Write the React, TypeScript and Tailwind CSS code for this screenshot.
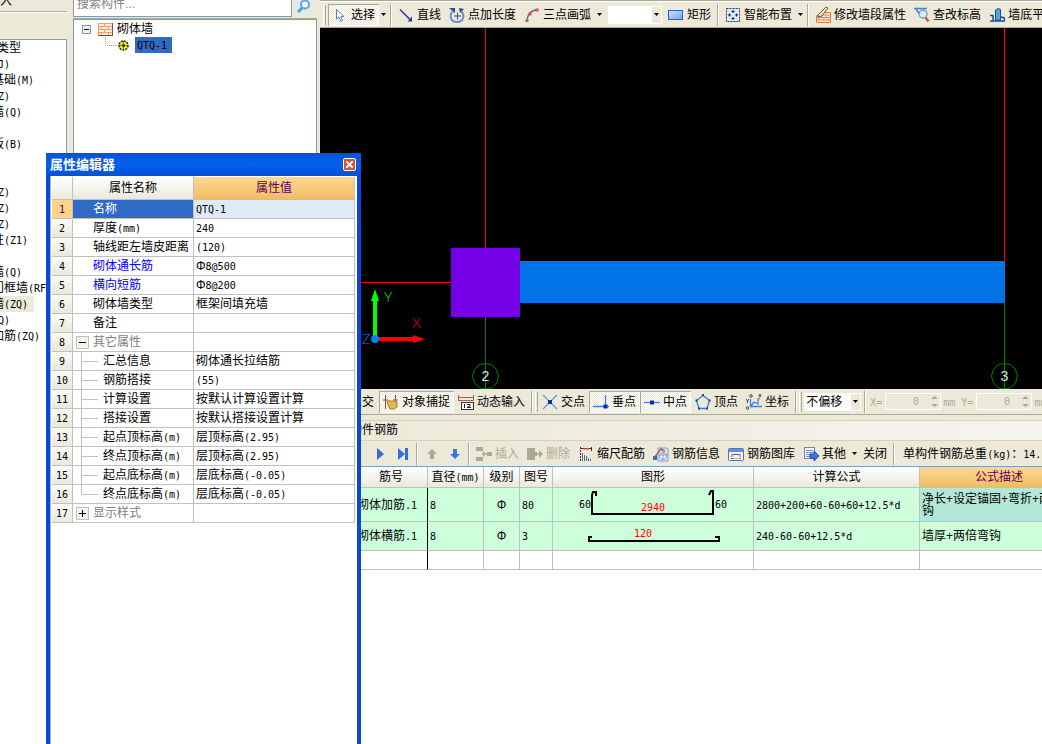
import type { ReactNode } from "react";

const Txt = ({ children }: { children: string }) => (
  <span className="whitespace-pre">
    {children.split(/([\x20-\x7e]+)/).map((part, i) =>
      i % 2 ? (
        <span key={i} className="font-['DejaVu_Sans_Mono',monospace] text-[10px] leading-none">
          {part}
        </span>
      ) : (
        part
      ),
    )}
  </span>
);

const Icon = ({ children }: { children: ReactNode }) => (
  <svg width="16" height="16" viewBox="0 0 16 16" fill="none" className="flex-none" aria-hidden="true">
    {children}
  </svg>
);

const CursorIcon = () => (
  <Icon>
    <path d="M4.500 2.500v9.500l2.500-2 2 4.500 1.500-1-1.500-4h3z" fill="#fff" stroke="#5b7fb8" />
  </Icon>
);
const LineIcon = () => (
  <Icon>
    <path d="M2 2.500 12 12.500" stroke="#1c3f94" strokeWidth="1.500" />
    <path d="M14 14.500H9.500L14 9.500z" fill="#1c3f94" />
  </Icon>
);
const LengthIcon = () => (
  <Icon>
    <path d="M3.500 4.500C0 8 1.500 15 8 15s8-7 4.500-10.500" stroke="#6f8fc4" strokeWidth="2" />
    <path d="M8.500 5.500v7M5 9h7" stroke="#2b4a8f" />
    <path d="M0 1h6v5zM10 1l5 1-4 4z" fill="#2b4a8f" />
  </Icon>
);
const ArcIcon = () => (
  <Icon>
    <path d="M3 14C3 8 7 3 13 3" stroke="#3b68b5" strokeWidth="1.500" />
    <path d="M1.500 12h3v3h-3zM4.500 5.500h3v3h-3zM11.500 1.500h3v3h-3z" fill="#e9502c" />
  </Icon>
);
const RectIcon = () => (
  <Icon>
    <linearGradient id="rect-fill" x1="0" y1="0" x2="1" y2="1">
      <stop stopColor="#d3e4fd" />
      <stop offset="1" stopColor="#6f9ff0" />
    </linearGradient>
    <rect x=".5" y="3.500" width="14" height="9" fill="url(#rect-fill)" stroke="#2b5fd0" />
  </Icon>
);
const SmartIcon = () => (
  <Icon>
    <rect x="1.500" y="1.500" width="13" height="13" fill="#dce8f8" stroke="#23365e" strokeDasharray="2 1" />
    <path d="M8 3v3M6.500 4.500h3M8 10v3M6.500 11.500h3M3 8h3M4.500 6.500v3M10 8h3M11.500 6.500v3" stroke="#1c2b4d" />
  </Icon>
);
const WallEditIcon = () => (
  <Icon>
    <path d="M1.500 15.500v-7h4l3-3h7v10z" fill="#fde6cf" stroke="#d9803f" />
    <path d="M2 10.500h13M2 13h13M8 8h7M6 8v2.500M11 8v2.500M4 10.500V13M9 10.500V13M13 10.500V13" stroke="#d9803f" strokeWidth=".8" />
    <path d="M3 8 11 0l2 1-6 8-4 1z" fill="#f2e4b8" stroke="#333" strokeWidth=".8" />
  </Icon>
);
const LevelIcon = () => (
  <Icon>
    <path d="M0 1.500h13M2 2l4 6 2-2" stroke="#4a7fc9" strokeWidth="1.500" />
    <circle cx="9" cy="7" r="4" fill="#d6e9fb" stroke="#7f96ba" strokeWidth="1.300" />
    <path d="m11.500 10.500 3 4" stroke="#b9603a" strokeWidth="2.500" />
  </Icon>
);
const BaseIcon = () => (
  <Icon>
    <path d="M6.500 13V3l3-1.500 2 1V13z" fill="#5ba0dd" stroke="#174f93" />
    <path d="M1 8.500h3V14H1M12 10l3.500 1v3H4V9" stroke="#174f93" strokeWidth="1.500" />
  </Icon>
);
const SnapIcon = () => (
  <Icon>
    <path d="M2.500 1v14M12.500 1v9M0 6h5M10 6h5" stroke="#964b4b" />
    <path d="M4 8c2-3 4 0 6-1l4 1v5l-3 2H7z" fill="#e2b94f" stroke="#a77e25" />
  </Icon>
);
const DynIcon = () => (
  <Icon>
    <path d="M.5 1v6M15.500 1v6M1 3.500h14M1 6.500h14" stroke="#a25d5d" />
    <rect x="3.500" y="8.500" width="12" height="7" fill="#fff" stroke="#333" />
    <path d="M6.500 10v4M9 10.500h3v1.500l-3 1.500h4" stroke="#222" />
  </Icon>
);
const CrossIcon = () => (
  <Icon>
    <path d="m1 1 14 14M15 1 1 15" stroke="#5e9be6" strokeWidth="1.300" />
    <rect x="6" y="6" width="4" height="4" fill="#12308f" />
  </Icon>
);
const PerpIcon = () => (
  <Icon>
    <path d="M0 12.500h16M12.500 1v13" stroke="#3d83dc" strokeWidth="1.300" />
    <rect x="10.500" y="10.500" width="4" height="4" fill="#12308f" />
  </Icon>
);
const MidIcon = () => (
  <Icon>
    <path d="M0 8.500h16" stroke="#3d83dc" strokeWidth="1.300" />
    <rect x="6" y="6.500" width="4" height="4" fill="#12308f" />
  </Icon>
);
const VertexIcon = () => (
  <Icon>
    <path d="m8 1.500 6.500 5L12 14.500H4L1.500 6.500z" stroke="#3d7fd6" strokeWidth="1.300" />
    <path d="M7 0h2v2H7zM13.500 5.500h2v2h-2zM.5 5.500h2v2h-2zM3 13.500h2v2H3zM11 13.500h2v2h-2z" fill="#1a479c" />
  </Icon>
);
const CoordIcon = () => (
  <Icon>
    <path d="M4.500 5v7.500H16M5 12l3-4 4 2V5l2-1" stroke="#3d83dc" strokeWidth="1.300" />
    <path d="M0 5l1.500 2L3 5M1.500 7v2M13 0l2 3M15 0l-2 3" stroke="#222" strokeWidth=".8" />
    <circle cx="5" cy="2" r="1.300" stroke="#222" strokeWidth=".8" />
    <circle cx="1.500" cy="14" r="1.300" stroke="#222" strokeWidth=".8" />
  </Icon>
);
const InsertIcon = () => (
  <Icon>
    <path d="M0 1h7v4H0zM0 11h7v4H0zM11 6h5v4h-5z" fill="#aca899" />
    <path d="M6 8h5M8 5.500v5" stroke="#aca899" strokeWidth="1.500" />
  </Icon>
);
const DeleteIcon = () => (
  <Icon>
    <path d="M0 2h8v4h2v4H8v4H0zM12 4l4 4-4 4z" fill="#aca899" />
    <path d="M9 8h4" stroke="#aca899" strokeWidth="1.500" />
  </Icon>
);
const ScaleIcon = () => (
  <Icon>
    <path d="M2.500 1v14" stroke="#333" strokeDasharray="2 1" />
    <path d="M3 2.500h10M13.500 1v4" stroke="#333" />
    <path d="M5 2h6v1.500H5z" fill="#c9452c" />
    <path d="M4.500 7v8M6.500 9v6M8.500 10v5M10.500 12v3M12.500 13v2" stroke="#4f6c9e" />
  </Icon>
);
const InfoIcon = () => (
  <Icon>
    <path d="M5 2h9l1 1v12H5z" fill="#dbe9fb" stroke="#7c9ccb" />
    <circle cx="10" cy="10" r="3.500" fill="#fff" stroke="#7c9ccb" />
    <path d="M10 5v9M6 9h9" stroke="#7c9ccb" />
    <path d="m1 12 7-9 4 2" stroke="#b0612e" strokeWidth="1.500" />
    <path d="M0 10h4v4H0z" fill="#3f6fb8" />
  </Icon>
);
const LibraryIcon = () => (
  <Icon>
    <rect x=".5" y="2.500" width="15" height="12" rx="1" fill="#eef4fc" stroke="#5576a8" />
    <path d="M1 3h14v3H1z" fill="#5d94dd" />
    <path d="M4 11V8.500h8V11" stroke="#5d6675" />
    <path d="M3 12h3v1H3z" fill="#d04a2b" />
    <path d="M7 12h3v1H7z" fill="#e0a72d" />
    <path d="M11 12h2v1h-2z" fill="#4f9848" />
  </Icon>
);
const OtherIcon = () => (
  <Icon>
    <rect x="1.500" y="1.500" width="10" height="11" fill="#f3f7fd" stroke="#6a89b8" />
    <path d="M3 4.500h7M3 6.500h7M3 8.500h4M3 10.500h4" stroke="#7d90b0" />
    <path d="M7 8h4V5l5 5-5 5v-3H7z" fill="#3d78dc" stroke="#1f4ea5" />
  </Icon>
);

const Caret = () => (
  <svg width="5" height="3" viewBox="0 0 5 3" className="flex-none" aria-hidden="true">
    <path d="M0 0h5L2.500 3z" fill="#000" />
  </svg>
);

const Tool = ({
  icon,
  label,
  pressed,
  disabled,
}: {
  icon?: ReactNode;
  label: string;
  pressed?: boolean;
  disabled?: boolean;
}) => (
  <button
    type="button"
    disabled={disabled}
    className={`flex h-[22px] flex-none items-center gap-[3px] px-1 whitespace-nowrap disabled:text-[#aca899] ${
      pressed
        ? "bg-[repeating-conic-gradient(#ffffff_0_25%,#ece9d8_0_50%)] bg-[length:2px_2px] shadow-[inset_1px_1px_0_#aca899,inset_-1px_-1px_0_#ffffff]"
        : ""
    }`}
  >
    {icon}
    <span>{label}</span>
  </button>
);

const DropArrow = ({ label }: { label: string }) => (
  <button type="button" aria-label={label} className="flex h-[22px] w-[9px] flex-none items-center justify-center">
    <Caret />
  </button>
);

const Sep = () => <div className="mx-[2px] h-[22px] w-[2px] flex-none border-r border-l border-r-white border-l-[#aca899]" />;
const Grip = () => <div className="h-5 w-[3px] flex-none border-r border-l border-r-[#aca899] border-l-white" />;

const Combo = ({ label, value, className }: { label: string; value: string; className: string }) => (
  <div className={`relative h-[18px] flex-none bg-white ${className}`}>
    <select aria-label={label} defaultValue={value} className="block h-full w-full appearance-none pl-[2px] leading-4">
      <option value={value}>{value}</option>
    </select>
    <span className="pointer-events-none absolute inset-y-px right-px flex w-[9px] items-center justify-center bg-[#ece9d8]">
      <Caret />
    </span>
  </div>
);

const Offset = ({ axis }: { axis: string }) => (
  <label className="flex flex-none items-center text-[#aca899]">
    <span className="w-[15px]">
      <Txt>{`${axis}=`}</Txt>
    </span>
    <span className="flex h-[17px] w-14 items-center border border-white pr-[2px]">
      <input
        disabled
        defaultValue="0"
        className="w-full min-w-0 flex-1 pr-3 text-right font-['DejaVu_Sans_Mono',monospace] text-[10px]"
      />
      <svg width="7" height="13" viewBox="0 0 7 13" className="flex-none" aria-hidden="true">
        <path d="M0 4h7L3.500 1zM0 9h7l-3.500 3z" fill="#aca899" />
      </svg>
    </span>
    <span className="w-5 pl-[2px]">
      <Txt>mm</Txt>
    </span>
  </label>
);

const categories = [
  "类型",
  "(J)",
  "基础(M)",
  "(Z)",
  "墙(Q)",
  "",
  "板(B)",
  "",
  "",
  "(Z)",
  "(Z)",
  "(Z)",
  "柱(Z1)",
  "",
  "墙(Q)",
  "门框墙(RF)",
  "墙(ZQ)",
  "(Q)",
  "加筋(ZQ)",
];

const CategoryPanel = () => (
  <div className="flex w-[67px] flex-none flex-col overflow-hidden">
    <div className="flex h-3 flex-none items-end border-b border-[#aca899] pb-1 leading-3">入</div>
    <div className="h-[27px] flex-none border-t border-white" />
    <ul className="min-h-0 flex-1 border-t border-r border-[#7f9db9] bg-white">
      {categories.map((name, i) => (
        <li key={i} className="flex h-4 items-center">
          <span className={`h-4 leading-4 ${i === 0 ? "-ml-[3px]" : "-ml-2"} ${i === 16 ? "bg-[#ece9d8] pr-[6px]" : ""}`}>
            <Txt>{name}</Txt>
          </span>
        </li>
      ))}
    </ul>
  </div>
);

const ComponentTree = () => (
  <div className="ml-[6px] flex w-[244px] flex-none flex-col">
    <div className="flex h-[19px] flex-none items-end gap-1 overflow-hidden border-b border-[#aca899]">
      <input
        aria-label="搜索构件"
        placeholder="搜索构件..."
        className="mb-px h-[26px] w-[219px] border border-[#7f9db9] bg-white px-[3px] placeholder:text-[#808080]"
      />
      <button type="button" aria-label="搜索" className="mb-[5px] flex-none bg-[#dfeaf5]">
        <svg width="15" height="15" viewBox="0 0 15 15" fill="none" className="block">
          <circle cx="9" cy="6.500" r="4" fill="#fff" stroke="#5aa4e3" strokeWidth="2" />
          <path d="m6 10-4 4" stroke="#4f9de0" strokeWidth="3" />
        </svg>
      </button>
    </div>
    <div className="min-h-0 flex-1 border border-[#7f9db9] bg-white pt-px">
      <div className="flex h-4 items-center pl-2">
        <svg width="9" height="9" viewBox="0 0 9 9" className="flex-none">
          <rect x=".5" y=".5" width="8" height="8" fill="#f5f3ee" stroke="#7898b5" />
          <path d="M2 4.500h5" stroke="#000" />
        </svg>
        <svg width="15" height="13" viewBox="0 0 15 13" className="mr-1 ml-[7px] flex-none">
          <path d="M0 0h15v13H0z" fill="#f0a070" />
          <path d="M1 1h5v2H1zM7 1h7v2H7zM1 4h2v2H1zM4 4h6v2H4zM11 4h3v2h-3zM1 7h5v2H1zM7 7h7v2H7zM1 10h2v2H1zM4 10h6v2H4zM11 10h3v2h-3z" fill="#fff0dc" />
          <path d="M0 12.500h15M14.500 0v13" stroke="#705040" />
        </svg>
        <span>砌体墙</span>
      </div>
      <div className="flex h-4 items-center pl-[31px]">
        <svg width="11" height="16" viewBox="0 0 11 16" className="flex-none">
          <path d="M.5 0v8.500H11" fill="none" stroke="#999" strokeDasharray="1 1" />
        </svg>
        <svg width="11" height="11" viewBox="0 0 11 11" className="mr-[6px] ml-[2px] flex-none">
          <circle cx="5.500" cy="5.500" r="4.500" fill="#f6ee18" stroke="#222" strokeWidth="1.500" strokeDasharray="2 1" />
          <circle cx="5.500" cy="5.500" r="1.500" fill="#222" />
          <path d="M5.500 1v9M1 5.500h9" stroke="#333" strokeWidth=".6" />
        </svg>
        <span className="h-4 w-[37px] bg-[#316ac5] pl-[2px] leading-4">
          <Txt>QTQ-1</Txt>
        </span>
      </div>
    </div>
  </div>
);

const DrawToolbar = () => (
  <div className="flex h-7 flex-none items-center overflow-hidden border-b border-[#aca899] pt-[2px] pl-[3px] shadow-[inset_0_1px_0_#aca899,inset_0_2px_0_#ffffff]">
    <Grip />
    <div className="w-[2px] flex-none" />
    <Tool icon={<CursorIcon />} label="选择" pressed />
    <DropArrow label="选择方式" />
    <Sep />
    <Tool icon={<LineIcon />} label="直线" />
    <Tool icon={<LengthIcon />} label="点加长度" />
    <Tool icon={<ArcIcon />} label="三点画弧" />
    <DropArrow label="画弧方式" />
    <Combo label="半径" value="" className="mr-[2px] ml-1 w-[54px]" />
    <Tool icon={<RectIcon />} label="矩形" />
    <Sep />
    <Tool icon={<SmartIcon />} label="智能布置" />
    <DropArrow label="布置方式" />
    <Sep />
    <Tool icon={<WallEditIcon />} label="修改墙段属性" />
    <Tool icon={<LevelIcon />} label="查改标高" />
    <Tool icon={<BaseIcon />} label="墙底平齐" />
  </div>
);

// model space is drawn in screen coordinates, shifted back to the view origin
const Viewport = () => (
  <svg className="block h-[361px] w-full flex-none bg-black" fill="none">
    <g transform="translate(-320 -28)">
      <path d="M320 282.500h132M485.500 28v221M1004.500 28v234" stroke="#ff0000" />
      <path d="M485.500 317v72M1004.500 303v86" stroke="#008000" />
      <path d="M451 248h69v69h-69z" fill="#7300e6" />
      <path d="M520 261h485v42H520z" fill="#0073e6" />
      {[485.5, 1004.5].map((x, i) => (
        <g key={x}>
          <path
            d={`M${x} 363.500l6 1 5 5 2 6.500-2 7-5 5-6 1-6-1-5-5-2-7 2-6.500 5-5z`}
            stroke="#008000"
          />
          <text x={x} y="381" textAnchor="middle" fill="#e0e0e0" className="font-['Liberation_Sans',sans-serif] text-[14px]">
            {i + 2}
          </text>
        </g>
      ))}
      <path d="M375 339v-40" stroke="#00ff00" strokeWidth="4" />
      <path d="m375 289 4 12h-8z" fill="#00ff00" />
      <path d="M375 339h39" stroke="#ff0000" strokeWidth="4" />
      <path d="m425 339-12 4v-8z" fill="#ff0000" />
      <circle cx="375" cy="339" r="4" fill="#0080ff" />
      <g className="font-['Lato',sans-serif] text-[14px] font-light">
        <text x="384" y="302" fill="#00ff00">Y</text>
        <text x="412" y="328" fill="#ff0000">X</text>
        <text x="362" y="344" fill="#0080ff">Z</text>
      </g>
    </g>
  </svg>
);

const SnapToolbar = () => (
  <div className="flex h-[26px] flex-none items-center overflow-hidden border-b border-[#aca899] pl-[26px]">
    <Tool label="正交" />
    <div className="w-px flex-none" />
    <Tool icon={<SnapIcon />} label="对象捕捉" pressed />
    <Tool icon={<DynIcon />} label="动态输入" />
    <Sep />
    <Grip />
    <Tool icon={<CrossIcon />} label="交点" />
    <Tool icon={<PerpIcon />} label="垂点" pressed />
    <Tool icon={<MidIcon />} label="中点" pressed />
    <Tool icon={<VertexIcon />} label="顶点" />
    <Tool icon={<CoordIcon />} label="坐标" />
    <Sep />
    <Grip />
    <Combo label="偏移方式" value="不偏移" className="mr-px ml-[2px] w-[57px]" />
    <Sep />
    <div className="ml-[2px] flex flex-none">
      <Offset axis="X" />
      <Offset axis="Y" />
    </div>
  </div>
);

const NavButton = ({ label, d, fill, disabled }: { label: string; d: string; fill: string; disabled?: boolean }) => (
  <button type="button" aria-label={label} disabled={disabled} className="flex h-[22px] w-[23px] flex-none items-center justify-center">
    <svg width="12" height="12" viewBox="0 0 12 12">
      <path d={d} fill={fill} />
    </svg>
  </button>
);

const RebarToolbar = () => (
  <div className="flex h-[26px] flex-none items-center overflow-hidden border-t border-[#d8d2bd] pl-12">
    <NavButton label="下一条" d="M3 0l7 6-7 6z" fill="#2f6fe0" />
    <NavButton label="最后一条" d="M1 0l7 6-7 6zM8 0h3v12H8z" fill="#2f6fe0" />
    <Sep />
    <NavButton label="上移" d="M6 1l5 5H8v5H4V6H1z" fill="#aca899" disabled />
    <NavButton label="下移" d="M6 11l5-5H8V1H4v5H1z" fill="#3877e6" />
    <Sep />
    <Tool icon={<InsertIcon />} label="插入" disabled />
    <Tool icon={<DeleteIcon />} label="删除" disabled />
    <Tool icon={<ScaleIcon />} label="缩尺配筋" />
    <Tool icon={<InfoIcon />} label="钢筋信息" />
    <Tool icon={<LibraryIcon />} label="钢筋图库" />
    <Tool icon={<OtherIcon />} label="其他" />
    <DropArrow label="其他操作" />
    <Tool label="关闭" />
    <Sep />
    <span className="ml-[6px] flex-none">
      <Txt>单构件钢筋总重(kg)：14.</Txt>
    </span>
  </div>
);

const rebarHead = ["", "筋号", "直径(mm)", "级别", "图号", "图形", "计算公式", "公式描述"];
const headBg = "bg-linear-to-b from-white to-[#ebe8dc]";
const headActive = "bg-linear-to-b from-[#fbd795] to-[#f2bd5e] text-[#5c0058]";
const shapeFont = "font-['DejaVu_Sans_Mono',monospace] text-[10px]";

const RebarTable = () => (
  <div className="min-h-0 flex-1 overflow-hidden border-t border-[#7f9db9] bg-white">
    <table className="w-[759px] table-fixed border-separate border-spacing-0 [&_td]:border-r [&_td]:border-b [&_td]:border-[#c0c0c0] [&_td]:px-[2px] [&_th]:border-r [&_th]:border-b [&_th]:border-[#c0c0c0]">
      <colgroup>
        <col className="w-[35px]" />
        <col className="w-[73px]" />
        <col className="w-14" />
        <col className="w-9" />
        <col className="w-[33px]" />
        <col className="w-[201px]" />
        <col className="w-[166px]" />
        <col className="w-[159px]" />
      </colgroup>
      <thead>
        <tr className="h-[21px]">
          {rebarHead.map((h, i) => (
            <th key={i} className={`font-normal ${i === 7 ? headActive : headBg}`}>
              <Txt>{h}</Txt>
            </th>
          ))}
        </tr>
      </thead>
      <tbody className="leading-3 [&_td:nth-child(2)]:border-r-black">
        <tr className="h-[34px] bg-[#ccffda]">
          <td>1</td>
          <td><Txt>砌体加筋.1</Txt></td>
          <td><Txt>8</Txt></td>
          <td className="text-center">Φ</td>
          <td><Txt>80</Txt></td>
          <td className="p-0!">
            <svg width="200" height="33" viewBox="553 488 200 33" fill="none" className="block">
              <path d="M596 496v-4h-3l-1 3v19h121v-23h-2l-2 4" stroke="#000" strokeWidth="2" />
              <g className={shapeFont} fill="#000">
                <text x="579" y="508">60</text>
                <text x="641" y="511" fill="#ff0000">2940</text>
                <text x="715" y="508">60</text>
              </g>
            </svg>
          </td>
          <td><Txt>2800+200+60-60+60+12.5*d</Txt></td>
          <td className="bg-[#b4e8d6]">净长+设定锚固+弯折+两倍弯钩</td>
        </tr>
        <tr className="h-[29px] bg-[#ccffda]">
          <td>2</td>
          <td><Txt>砌体横筋.1</Txt></td>
          <td><Txt>8</Txt></td>
          <td className="text-center">Φ</td>
          <td><Txt>3</Txt></td>
          <td className="p-0!">
            <svg width="200" height="28" viewBox="553 522 200 28" fill="none" className="block">
              <path d="M592 537h-3v4h130v-4h-4" stroke="#000" strokeWidth="2" />
              <text x="634" y="537" fill="#ff0000" className={shapeFont}>120</text>
            </svg>
          </td>
          <td><Txt>240-60-60+12.5*d</Txt></td>
          <td>墙厚+两倍弯钩</td>
        </tr>
        <tr className="h-[19px]">
          {rebarHead.map((h) => (
            <td key={h} />
          ))}
        </tr>
      </tbody>
    </table>
  </div>
);

type Prop = { name: string; value: string; kind?: "key" | "group" | "child"; open?: boolean };

const props: Prop[] = [
  { name: "名称", value: "QTQ-1" },
  { name: "厚度(mm)", value: "240" },
  { name: "轴线距左墙皮距离", value: "(120)" },
  { name: "砌体通长筋", value: "Φ8@500", kind: "key" },
  { name: "横向短筋", value: "Φ8@200", kind: "key" },
  { name: "砌体墙类型", value: "框架间填充墙" },
  { name: "备注", value: "" },
  { name: "其它属性", value: "", kind: "group", open: true },
  { name: "汇总信息", value: "砌体通长拉结筋", kind: "child" },
  { name: "钢筋搭接", value: "(55)", kind: "child" },
  { name: "计算设置", value: "按默认计算设置计算", kind: "child" },
  { name: "搭接设置", value: "按默认搭接设置计算", kind: "child" },
  { name: "起点顶标高(m)", value: "层顶标高(2.95)", kind: "child" },
  { name: "终点顶标高(m)", value: "层顶标高(2.95)", kind: "child" },
  { name: "起点底标高(m)", value: "层底标高(-0.05)", kind: "child" },
  { name: "终点底标高(m)", value: "层底标高(-0.05)", kind: "child" },
  { name: "显示样式", value: "", kind: "group" },
];

const PropName = ({ prop, last }: { prop: Prop; last: boolean }) => {
  if (prop.kind === "group") {
    return (
      <div className="flex h-[18px] items-center gap-1 pl-[3px] text-[#808080]">
        <button
          type="button"
          aria-label={prop.name}
          className="flex size-[13px] flex-none items-center justify-center border border-[#c0c0c0] bg-[#f4f3ee]"
        >
          <svg width="7" height="7" viewBox="0 0 7 7">
            <path d={prop.open ? "M0 3.500h7" : "M0 3.500h7M3.500 0v7"} stroke="#000" />
          </svg>
        </button>
        {prop.name}
      </div>
    );
  }
  if (prop.kind === "child") {
    return (
      <div className="flex h-[18px] items-center pl-2">
        <svg width="18" height="18" className="mr-1 flex-none overflow-visible" fill="none">
          <path d={last ? "M.5 0v9.500H17" : "M.5 0v19M.5 9.500H17"} stroke="#c0c0c0" />
        </svg>
        <Txt>{prop.name}</Txt>
      </div>
    );
  }
  return (
    <div className={`h-[18px] pl-5 ${prop.kind === "key" ? "text-[#0000ff]" : ""}`}>
      <Txt>{prop.name}</Txt>
    </div>
  );
};

const PropertyEditor = () => (
  <section
    aria-label="属性编辑器"
    className="absolute top-[153px] bottom-0 left-[46px] flex w-[315px] flex-col border-x-4 border-[#0a48d8] bg-[#0a48d8]"
  >
    <header className="-mx-1 flex h-[23px] flex-none items-center justify-between bg-linear-to-b from-[#0a50d8] via-[#0561f0] to-[#0450d8] pr-[5px] pl-1">
      <h1 className="text-[13px] font-bold text-white">属性编辑器</h1>
      <button
        type="button"
        aria-label="关闭"
        className="flex size-[13px] items-center justify-center rounded-[2px] border border-white bg-[#e2512f]"
      >
        <svg width="7" height="7" viewBox="0 0 7 7">
          <path d="m0 0 7 7M7 0 0 7" stroke="#fff" strokeWidth="2" />
        </svg>
      </button>
    </header>
    <div className="min-h-0 flex-1 border-l border-[#9db8d8] bg-white pt-px pr-[2px] pl-px">
      <table className="w-full table-fixed border-separate border-spacing-0 [&_td]:border-r [&_td]:border-b [&_td]:border-[#c0c0c0] [&_td]:p-0 [&_th]:border-r [&_th]:border-b [&_th]:border-[#c0c0c0] [&_th]:p-0 [&_th]:font-normal">
        <colgroup>
          <col className="w-[21px]" />
          <col className="w-[121px]" />
          <col />
        </colgroup>
        <thead>
          <tr className="h-[23px]">
            <th className={headBg} />
            <th className={headBg}>属性名称</th>
            <th className={headActive}>属性值</th>
          </tr>
        </thead>
        <tbody>
          {props.map((prop, i) => (
            <tr key={prop.name} className="h-[19px] leading-[18px]">
              <th className={i === 0 ? "bg-[#fdd38a] text-[#5c0058]" : "bg-linear-to-b from-[#fafaf6] to-[#ebe8dc]"}>
                <div className="h-[18px]">
                  <Txt>{String(i + 1)}</Txt>
                </div>
              </th>
              <td className={i === 0 ? "bg-[#316ac5] text-white" : ""}>
                <PropName prop={prop} last={i === 15} />
              </td>
              <td className={i === 0 ? "bg-[#dfe9f7]" : ""}>
                <div className="h-[18px] pl-[2px]">
                  <Txt>{prop.value}</Txt>
                </div>
              </td>
            </tr>
          ))}
        </tbody>
      </table>
    </div>
  </section>
);

export default function App() {
  return (
    <div className="relative flex h-screen overflow-hidden bg-[#ece9d8] font-['Liberation_Sans','Noto_Sans_CJK_SC',sans-serif] text-[12px] leading-4 text-black">
      <CategoryPanel />
      <ComponentTree />
      <main className="ml-[3px] flex min-w-0 flex-1 flex-col">
        <DrawToolbar />
        <Viewport />
        <SnapToolbar />
        <div className="mt-[5px] h-5 flex-none border-t border-[#d8d2bd] bg-linear-to-r from-[#ece9d8] to-[#f5f4ee] pl-[30px] leading-[19px]">
          构件钢筋
        </div>
        <RebarToolbar />
        <RebarTable />
      </main>
      <PropertyEditor />
    </div>
  );
}
